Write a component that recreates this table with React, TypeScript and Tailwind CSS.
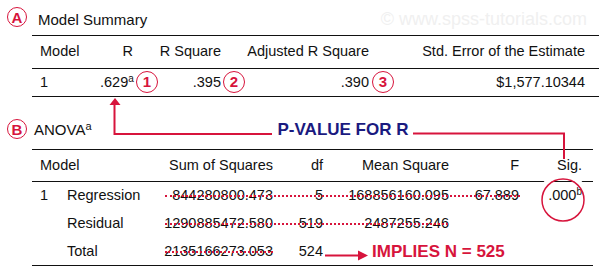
const RED = "#d7143c";

function Badge({ label }: { label: string }) {
  return (
    <div className="w-5 h-5 shrink-0 rounded-full border-[1.5px] border-[#d7143c] flex items-center justify-center">
      <span className="text-[15px] font-bold leading-none text-[#d7143c]">{label}</span>
    </div>
  );
}

function Num({ n }: { n: string }) {
  return (
    <div className="w-[22px] h-[22px] rounded-full border-[1.5px] border-[#d7143c] flex items-center justify-center">
      <span className="text-[15px] font-bold leading-none text-[#d7143c]">{n}</span>
    </div>
  );
}

const anovaRows = [
  { model: "1", name: "Regression", ss: "844280800.473", df: "5", ms: "168856160.095", f: "67.889", dots: 355 },
  { model: "", name: "Residual", ss: "1290885472.580", df: "519", ms: "2487255.246", f: "", dots: 283 },
];

export default function App() {
  return (
    <div className="relative w-[600px] h-[276px] overflow-hidden bg-white text-[14.5px] text-[#111] font-['Liberation_Sans',Arial,sans-serif]">
      {/* Model summary */}
      <div className="flex h-[35px] items-start pt-[7px] pl-[7px]">
        <Badge label="A" />
        <span className="ml-[11px] mt-[3px] text-[15px] leading-[20px]">Model Summary</span>
        <span className="ml-auto mr-[13px] mt-[2px] text-[18px] leading-[20px] text-[#f0f0f0]">© www.spss-tutorials.com</span>
      </div>

      <div className="ml-[32px] w-[567px] border-t-[1.5px] border-b-[1.5px] border-[#111]">
        <div className="grid grid-cols-[68px_33px_88px_148px_216px] h-[33px] items-center border-b-[1.5px] border-[#111]">
          <div className="pl-[8px]">Model</div>
          <div className="text-right">R</div>
          <div className="text-right">R Square</div>
          <div className="text-right">Adjusted R Square</div>
          <div className="text-right">Std. Error of the Estimate</div>
        </div>
        <div className="grid grid-cols-[68px_33px_88px_148px_216px] h-[27px] items-center">
          <div className="pl-[8px]">1</div>
          <div className="relative text-right">
            .629<sup className="text-[10px]">a</sup>
            <div className="absolute left-[36px] -top-[1px]"><Num n="1" /></div>
          </div>
          <div className="relative text-right">
            .395
            <div className="absolute left-[90px] -top-[1px]"><Num n="2" /></div>
          </div>
          <div className="relative text-right">
            .390
            <div className="absolute left-[151px] -top-[1px]"><Num n="3" /></div>
          </div>
          <div className="text-right">$1,577.10344</div>
        </div>
      </div>

      {/* ANOVA */}
      <div className="flex h-[52px] items-start pt-[22px] pl-[7px]">
        <Badge label="B" />
        <span className="ml-[7px] mt-[1px] text-[15px] leading-[20px]">
          ANOVA<sup className="text-[11px]">a</sup>
        </span>
        <span className="ml-[186px] mt-[1px] text-[17px] font-bold leading-[20px] text-[#1a1a80]">P-VALUE FOR R</span>
      </div>

      <div className="ml-[32px] w-[561px] border-t-[1.5px] border-b-[1.5px] border-[#111]">
        <div className="grid grid-cols-[30px_88px_123px_50px_126px_70px_63px] h-[32px] items-center border-b-[1.5px] border-[#111]">
          <div className="col-span-2 pl-[8px]">Model</div>
          <div className="text-right">Sum of Squares</div>
          <div className="text-right">df</div>
          <div className="text-right">Mean Square</div>
          <div className="text-right">F</div>
          <div className="text-right">Sig.</div>
        </div>
        {anovaRows.map((r) => (
          <div key={r.name} className="relative grid grid-cols-[30px_88px_123px_50px_126px_70px_63px] h-[28px] items-center">
            <div className="pl-[8px]">{r.model}</div>
            <div className="pl-[5px]">{r.name}</div>
            <div className="text-right">{r.ss}</div>
            <div className="text-right">{r.df}</div>
            <div className="text-right">{r.ms}</div>
            <div className="text-right">{r.f}</div>
            <div className="text-right">
              {r.model ? (
                <>
                  .000<sup className="text-[10px]">b</sup>
                </>
              ) : null}
            </div>
            <div
              className="absolute left-[133px] top-[13px] border-t-2 border-dotted border-[#d7143c]"
              style={{ width: r.dots }}
            />
          </div>
        ))}
        <div className="relative grid grid-cols-[30px_88px_123px_50px_189px] h-[27px] items-center">
          <div />
          <div className="pl-[5px]">Total</div>
          <div className="text-right">2135166273.053</div>
          <div className="text-right">524</div>
          <div className="pl-[49px] whitespace-nowrap text-[17px] font-bold text-[#d7143c]">IMPLIES N = 525</div>
          <div className="absolute left-[133px] top-[13px] w-[108px] border-t-2 border-dotted border-[#d7143c]" />
        </div>
      </div>

      {/* annotation arrows */}
      <svg className="absolute left-0 top-0 pointer-events-none" width="600" height="276" viewBox="0 0 600 276">
        <polygon points="115,98 109.5,105 120.5,105" fill={RED} />
        <path d="M114.5 104 V134 H272" fill="none" stroke={RED} strokeWidth="2" />
        <path d="M564 150 V159" fill="none" stroke="#fff" strokeWidth="16" />
        <path d="M413 133.5 H564 V159" fill="none" stroke={RED} strokeWidth="2" />
        <circle cx="563" cy="200" r="24" fill="none" stroke="#fff" strokeWidth="5" />
        <circle cx="563" cy="200" r="21" fill="none" stroke={RED} strokeWidth="1.5" />
        <path d="M325 255.5 H360" fill="none" stroke={RED} strokeWidth="2" />
        <polygon points="368,255.5 358,250.5 358,260.5" fill={RED} />
      </svg>
    </div>
  );
}
